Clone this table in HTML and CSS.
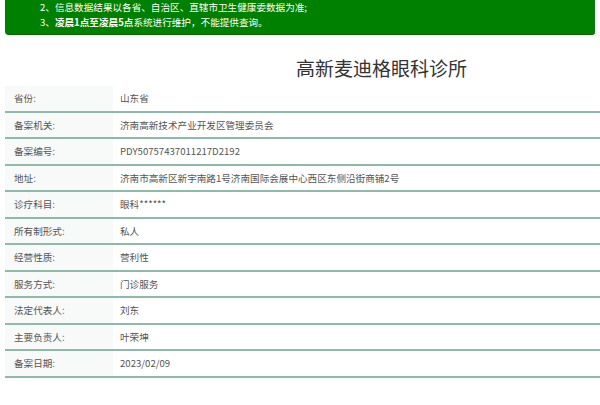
FILE: index.html
```html
<!DOCTYPE html>
<html lang="zh-CN">
<head>
<meta charset="utf-8">
<title>高新麦迪格眼科诊所</title>
<link rel="stylesheet" href="styles.css">
</head>
<body>
<div class="page">
  <div class="notice">
    <p>2、信息数据结果以各省、自治区、直辖市卫生健康委数据为准;</p>
    <p>3、<b>凌晨1点至凌晨5点</b>系统进行维护，不能提供查询。</p>
  </div>
  <h1 class="title">高新麦迪格眼科诊所</h1>
  <div class="table">
    <div class="row"><div class="label">省份:</div><div class="value">山东省</div></div>
    <div class="row"><div class="label">备案机关:</div><div class="value">济南高新技术产业开发区管理委员会</div></div>
    <div class="row"><div class="label">备案编号:</div><div class="value">PDY50757437011217D2192</div></div>
    <div class="row"><div class="label">地址:</div><div class="value">济南市高新区新宇南路1号济南国际会展中心西区东侧沿街商铺2号</div></div>
    <div class="row"><div class="label">诊疗科目:</div><div class="value">眼科******</div></div>
    <div class="row"><div class="label">所有制形式:</div><div class="value">私人</div></div>
    <div class="row"><div class="label">经营性质:</div><div class="value">营利性</div></div>
    <div class="row"><div class="label">服务方式:</div><div class="value">门诊服务</div></div>
    <div class="row"><div class="label">法定代表人:</div><div class="value">刘东</div></div>
    <div class="row"><div class="label">主要负责人:</div><div class="value">叶荣坤</div></div>
    <div class="row"><div class="label">备案日期:</div><div class="value">2023/02/09</div></div>
  </div>
</div>
</body>
</html>
```
FILE: styles.css
```css
html, body {
  margin: 0;
  padding: 0;
  background: #ffffff;
}
body {
  font-family: "Noto Sans CJK SC", "Noto Sans", sans-serif;
  color: #555555;
}
.page {
  padding-left: 5px;
}
.notice {
  margin-right: 5px;
  padding: 0 0 5px 35px;
  background: #008000;
  border-bottom: 1px solid #006b00;
  border-radius: 0 0 3px 4px;
  color: #ffffff;
  font-size: 9.6px;
  line-height: 15px;
  box-sizing: border-box;
  height: 35px;
}
.notice p {
  margin: 0;
}
.notice b {
  font-weight: 700;
}
.title {
  margin: 0;
  padding: 23px 0 8px 291px;
  font-size: 19px;
  line-height: 20px;
  font-weight: 400;
  color: #333333;
}
.table {
  display: flex;
  flex-direction: column;
}
.row {
  display: flex;
  height: 24.5px;
  border-bottom: 2px solid #8dbaa9;
  font-size: 9.6px;
  line-height: 24.5px;
}
.label {
  width: 99px;
  padding-left: 9px;
  background: #f8f9f9;
}
.value {
  padding-left: 7px;
}
```
